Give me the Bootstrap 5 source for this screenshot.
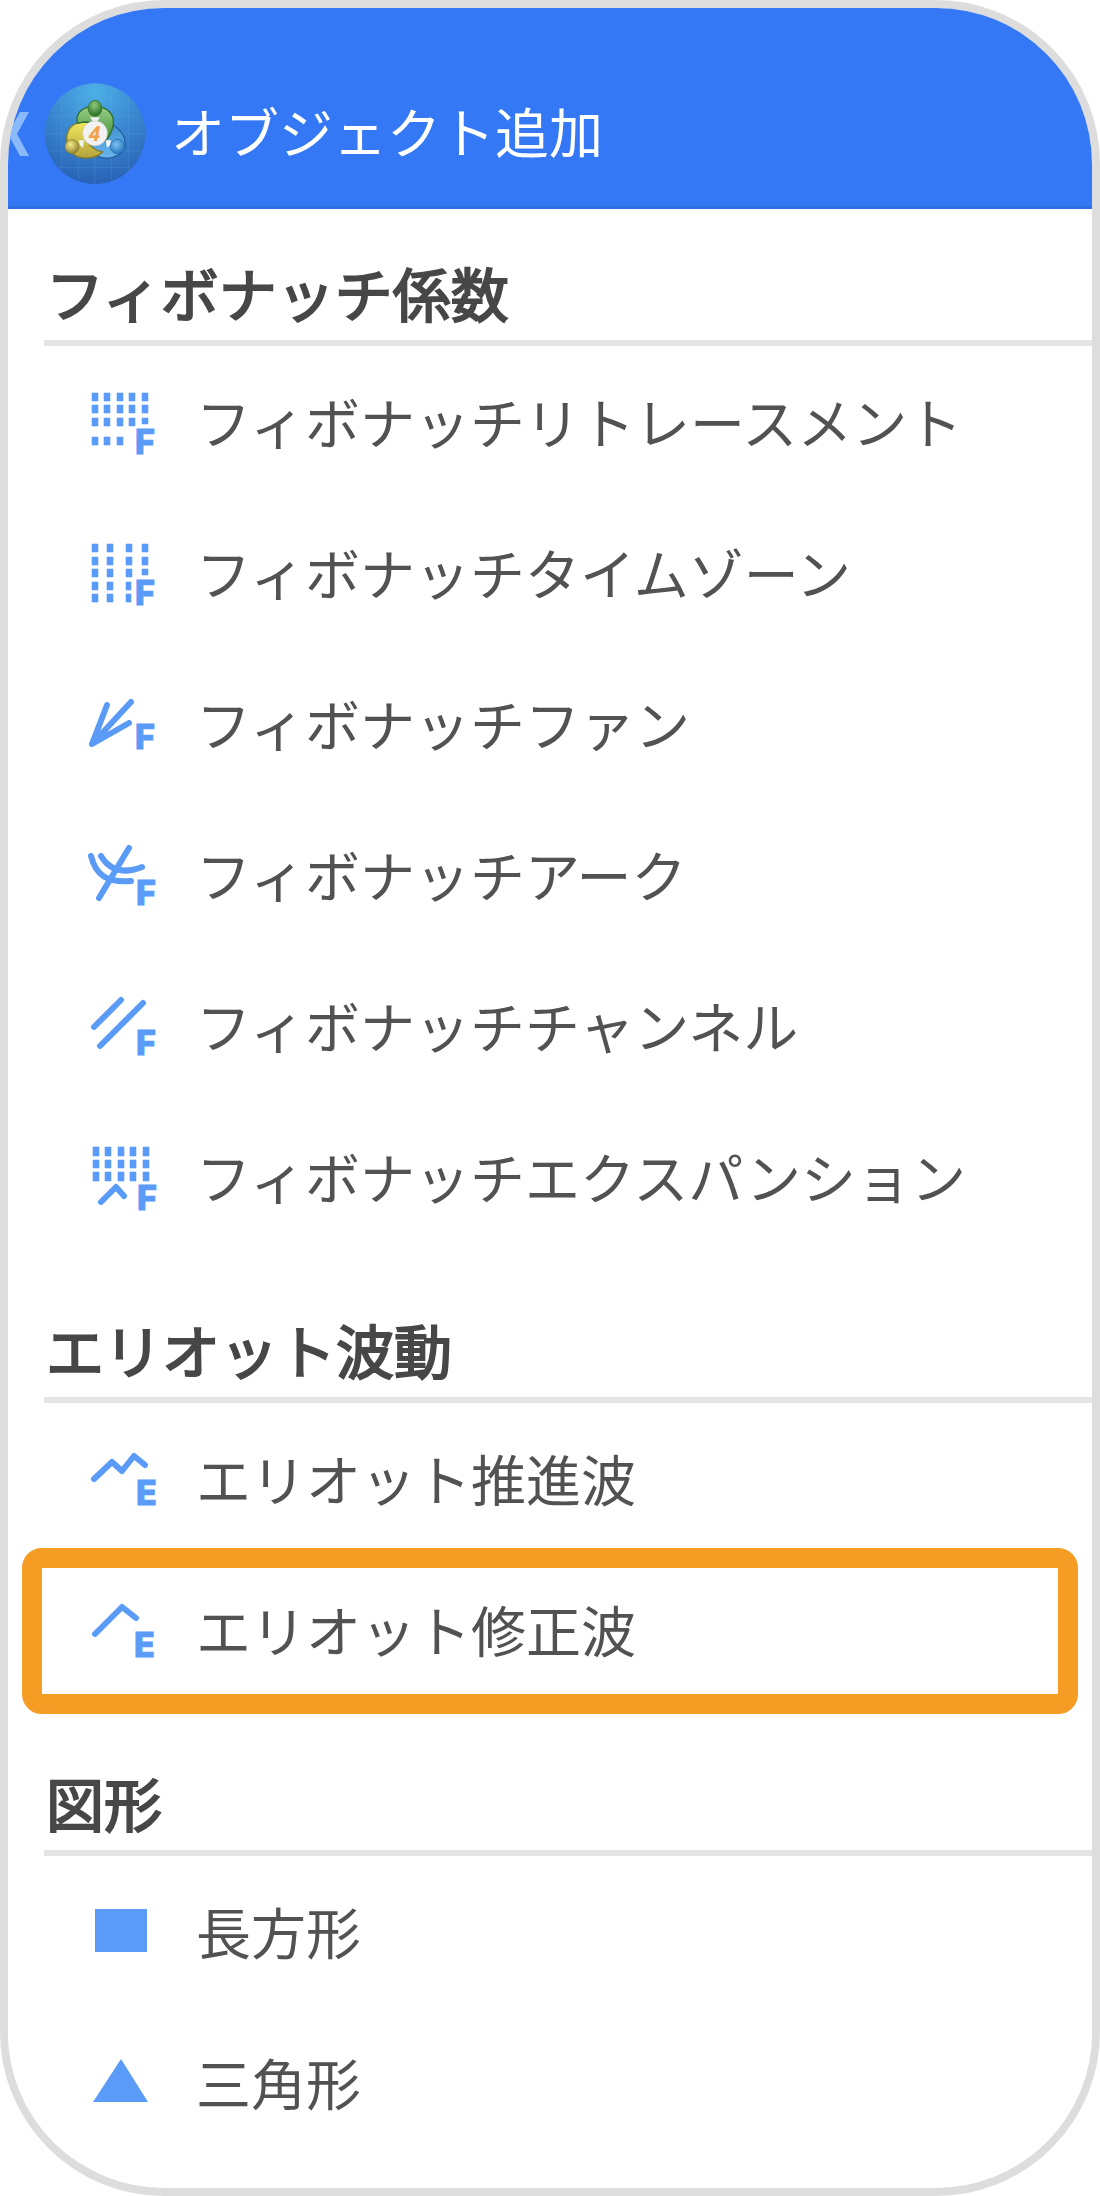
<!DOCTYPE html>
<html lang="ja">
<head>
<meta charset="utf-8">
<meta name="viewport" content="width=device-width, initial-scale=1">
<title>オブジェクト追加</title>
<link href="https://cdn.jsdelivr.net/npm/bootstrap@5.3.0/dist/css/bootstrap.min.css" rel="stylesheet">
<style>
  body { font-family: "Noto Sans CJK JP", sans-serif; background: #fff; }
  .phone { border: 8px solid #ddd; border-radius: 164px; padding-bottom: 30px; background: #fff; }
  .topbar { background: #3478f6; border-bottom: 3px solid #2f6fe4; padding: 75px 36px 21px; margin-bottom: 1px; }
  .back-btn { left: 0; top: 104px; line-height: 0; }
  .topbar h1 { font-size: 54px; line-height: 96px; padding-bottom: 6px; margin-left: 25px; }
  .group-title { font-size: 58px; line-height: 84px; font-weight: 400; color: #474747; -webkit-text-stroke: 2px #474747;
    margin: 0 0 0 36px; padding: 55px 0 6px 2px; border-bottom: 6px solid #e5e5e5; }
  .first-group .group-title { padding-top: 40px; }
  .object-item { height: 151px; padding: 0 0 0 76px; gap: 32px; font-size: 55px; line-height: 80px; color: #525252; white-space: nowrap; }
  .object-item span { padding-bottom: 4px; }
  .object-item svg { width: 80px; height: 151px; flex: none; fill: #5b9bf8; }
  .object-item svg .ln { fill: none; stroke: #5b9bf8; stroke-width: 6; stroke-linecap: round; stroke-linejoin: round; }
  .object-item svg text { font: 800 34px Inter, sans-serif; stroke: #5b9bf8; stroke-width: 1; }
  .picked::after { content: ""; position: absolute; inset: -6px 14px -9px; border: 20px solid #f49c24; border-radius: 20px; pointer-events: none; }
</style>
<script src="https://cdn.jsdelivr.net/npm/bootstrap@5.3.0/dist/js/bootstrap.bundle.min.js"></script>
</head>
<body>
<div class="phone overflow-hidden">
  <header class="topbar d-flex align-items-center position-relative">
    <button type="button" class="back-btn btn p-0 border-0 rounded-0 position-absolute" aria-label="戻る">
      <svg width="22" height="44" viewBox="0 0 22 44"><path d="M12 0h9L9 22l12 22h-9L0 22z" fill="#8ab9fc"/></svg>
    </button>
    <svg width="102" height="102" viewBox="42 39 306 306" class="flex-shrink-0" aria-hidden="true">
      <defs>
        <radialGradient id="sky" cx="50%" cy="8%" r="92%"><stop offset="0" stop-color="#4db0e6"/><stop offset=".45" stop-color="#3c8bd3"/><stop offset="1" stop-color="#2862b5"/></radialGradient>
        <linearGradient id="gr" x1="0" y1="0" x2="0" y2="1"><stop offset="0" stop-color="#9bd08a"/><stop offset="1" stop-color="#3f8d32"/></linearGradient>
        <linearGradient id="ye" x1="0" y1="0" x2="0" y2="1"><stop offset="0" stop-color="#f0e75c"/><stop offset="1" stop-color="#b5a33b"/></linearGradient>
        <linearGradient id="bl" x1="0" y1="0" x2="0" y2="1"><stop offset="0" stop-color="#3f8fd0"/><stop offset="1" stop-color="#69b5ec"/></linearGradient>
        <radialGradient id="gh" cx="45%" cy="30%" r="65%"><stop offset="0" stop-color="#8cc878"/><stop offset="1" stop-color="#2f7429"/></radialGradient>
        <radialGradient id="yh" cx="40%" cy="35%" r="65%"><stop offset="0" stop-color="#f3eb8b"/><stop offset="1" stop-color="#94852e"/></radialGradient>
        <radialGradient id="bh" cx="40%" cy="35%" r="65%"><stop offset="0" stop-color="#7fc2f0"/><stop offset="1" stop-color="#2473bb"/></radialGradient>
      </defs>
      <circle cx="195" cy="191" r="151" fill="url(#sky)"/>
      <path d="M95 78v226M145 50v282M195 40v302M245 50v282M295 78v226M60 140h270M46 192h298M60 243h270M86 293h218" stroke="#6fb3e6" stroke-opacity=".3" stroke-width="2" fill="none"/>
      <path d="M236 162c30 6 50 34 50 62-2 28-34 42-62 40-26-2-46-20-54-44l30-10z" fill="url(#bl)" stroke="#23609f" stroke-width="4"/>
      <path d="M180 156c-46-4-70 16-70 50 0 36 24 60 60 58 20 0 36-6 48-18-24-4-44-20-46-40z" fill="url(#ye)" stroke="#7e7a33" stroke-width="4"/>
      <path d="M142 160c-6-28 12-51 53-51s60 28 54 58c-4 22-12 36-24 46l-18-40-14-16-32-1z" fill="url(#gr)" stroke="#2f6d35" stroke-width="4"/>
      <path d="M180 142h30l-8 12h-14zM146 211h16l-3 22-10-8zM243 211h-16l4 22 10-8z" fill="#eef4f2"/>
      <ellipse cx="195" cy="115" rx="21" ry="24" fill="url(#gh)" stroke="#2c6b2b" stroke-width="2"/>
      <circle cx="126" cy="230" r="21" fill="url(#yh)" stroke="#7e7a33" stroke-width="2"/>
      <circle cx="263" cy="230" r="22" fill="url(#bh)" stroke="#2367aa" stroke-width="2"/>
      <circle cx="195" cy="190" r="37" fill="#f2f2f2" stroke="#d2d2d2" stroke-width="2"/>
      <text x="194" y="212" text-anchor="middle" font-family="Open Sans, sans-serif" font-size="62" font-weight="700" font-style="italic" fill="#f3a14b">4</text>
    </svg>
    <h1 class="text-white fw-normal mb-0 text-nowrap">オブジェクト追加</h1>
  </header>
  <main>
    <section class="first-group">
      <h2 class="group-title">フィボナッチ係数</h2>
      <div class="list-group list-group-flush">
        <button type="button" class="object-item list-group-item list-group-item-action border-0 d-flex align-items-center">
          <svg viewBox="0 0 80 151" aria-hidden="true"><path d="M8 47h6v8h-6zM20 47h6v8h-6zM33 47h6v8h-6zM45 47h6v8h-6zM58 47h6v8h-6zM8 59h6v8h-6zM20 59h6v8h-6zM33 59h6v8h-6zM45 59h6v8h-6zM58 59h6v8h-6zM8 72h6v8h-6zM20 72h6v8h-6zM33 72h6v8h-6zM45 72h6v8h-6zM58 72h6v6h-6zM8 91h6v8h-6zM20 91h6v8h-6zM33 91h6v8h-6z" stroke="#5b9bf8" stroke-width=".6"/><text x="51" y="108">F</text></svg>
          <span>フィボナッチリトレースメント</span></button>
        <button type="button" class="object-item list-group-item list-group-item-action border-0 d-flex align-items-center">
          <svg viewBox="0 0 80 151" aria-hidden="true"><path d="M8 47h6v8h-6zM23 47h6v8h-6zM42 47h6v8h-6zM58 47h6v8h-6zM8 60h6v8h-6zM23 60h6v8h-6zM42 60h6v8h-6zM58 60h6v8h-6zM8 72h6v8h-6zM23 72h6v8h-6zM42 72h6v8h-6zM58 72h6v6h-6zM8 85h6v8h-6zM23 85h6v8h-6zM42 85h5v8h-5zM8 97h6v8h-6zM23 97h6v8h-6zM42 97h5v8h-5z" stroke="#5b9bf8" stroke-width=".6"/><text x="51" y="108">F</text></svg>
          <span>フィボナッチタイムゾーン</span></button>
        <button type="button" class="object-item list-group-item list-group-item-action border-0 d-flex align-items-center">
          <svg viewBox="0 0 80 151" aria-hidden="true"><path class="ln" d="M23 57L8 96 47 54M8 96l37-21"/><text x="51" y="101">F</text></svg>
          <span>フィボナッチファン</span></button>
        <button type="button" class="object-item list-group-item list-group-item-action border-0 d-flex align-items-center">
          <svg viewBox="0 0 80 151" aria-hidden="true"><path class="ln" d="M45 49L15 99M7 57C12 77 24 84 47 82M17 57C26 72 40 75 58 68"/><text x="52" y="106">F</text></svg>
          <span>フィボナッチアーク</span></button>
        <button type="button" class="object-item list-group-item list-group-item-action border-0 d-flex align-items-center">
          <svg viewBox="0 0 80 151" aria-hidden="true"><path class="ln" d="M10 77L37 50M16 96L59 53"/><text x="52" y="105">F</text></svg>
          <span>フィボナッチチャンネル</span></button>
        <button type="button" class="object-item list-group-item list-group-item-action border-0 d-flex align-items-center">
          <svg viewBox="0 0 80 151" aria-hidden="true"><path d="M9 46h6v9h-6zM21 46h6v9h-6zM34 46h6v9h-6zM46 46h6v9h-6zM59 46h6v9h-6zM9 59h6v8h-6zM21 59h6v8h-6zM34 59h6v8h-6zM46 59h6v8h-6zM59 59h6v8h-6zM9 71h6v9h-6zM21 71h6v9h-6zM34 71h6v9h-6zM46 71h6v9h-6zM59 71h6v9h-6z" stroke="#5b9bf8" stroke-width=".6"/><path class="ln" d="M17 101l15-15 8 9"/><text x="53" y="109">F</text></svg>
          <span>フィボナッチエクスパンション</span></button>
      </div>
    </section>
    <section>
      <h2 class="group-title">エリオット波動</h2>
      <div class="list-group list-group-flush overflow-visible">
        <button type="button" class="object-item list-group-item list-group-item-action border-0 d-flex align-items-center">
          <svg viewBox="0 0 80 151" aria-hidden="true"><path class="ln" d="M10 76l18-17 10 9 12-15 11 9"/><text x="52" y="102">E</text></svg>
          <span>エリオット推進波</span></button>
        <button type="button" class="picked object-item list-group-item list-group-item-action border-0 d-flex align-items-center">
          <svg viewBox="0 0 80 151" aria-hidden="true"><path class="ln" d="M11 80l27-27 14 11"/><text x="50" y="103">E</text></svg>
          <span>エリオット修正波</span></button>
      </div>
    </section>
    <section>
      <h2 class="group-title">図形</h2>
      <div class="list-group list-group-flush">
        <button type="button" class="object-item list-group-item list-group-item-action border-0 d-flex align-items-center">
          <svg viewBox="0 0 80 151" aria-hidden="true"><path d="M11 53h52v43H11z"/></svg>
          <span>長方形</span></button>
        <button type="button" class="object-item list-group-item list-group-item-action border-0 d-flex align-items-center">
          <svg viewBox="0 0 80 151" aria-hidden="true"><path d="M37 52l27 43H9z"/></svg>
          <span>三角形</span></button>
      </div>
    </section>
  </main>
</div>
</body>
</html>
